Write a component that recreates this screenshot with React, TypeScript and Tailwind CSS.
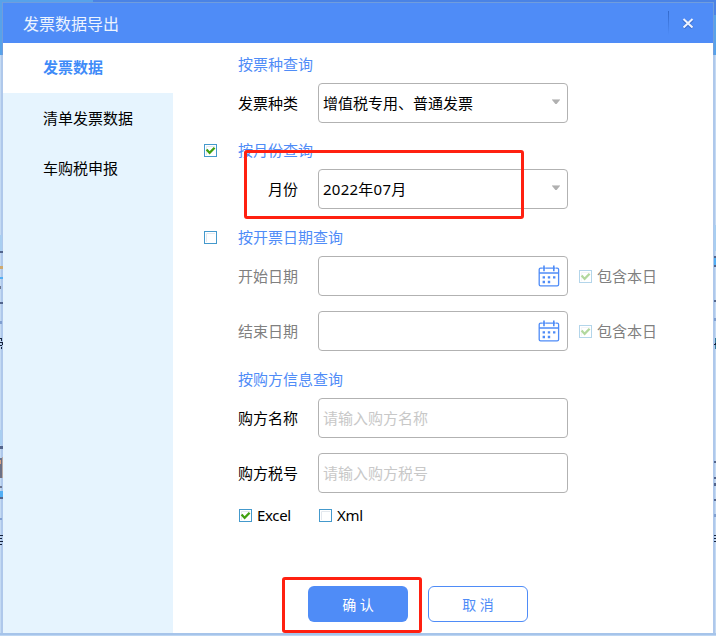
import type { ReactNode } from "react";

function Check({ checked = false, disabled = false }: { checked?: boolean; disabled?: boolean }) {
  return (
    <svg width="13" height="13" viewBox="0 0 13 13" className={disabled ? "shrink-0 opacity-40" : "shrink-0"}>
      <rect x="0.5" y="0.5" width="12" height="12" fill="#fff" stroke="#4499cc" />
      <path d="M2.5 11V2.5H11" fill="none" stroke="#e3e8ee" />
      {checked && <path d="M2.6 5.6L5.6 8.9L10.6 3.7" fill="none" stroke="#40a010" strokeWidth="2.3" />}
    </svg>
  );
}

function CalendarIcon() {
  return (
    <svg width="22" height="22" viewBox="0 0 22 22" fill="none" stroke="#4f8cf7" strokeWidth="1.3" className="-mr-px shrink-0">
      <path d="M4 3.2H2.6Q1.2 3.2 1.2 4.6V19.4Q1.2 20.8 2.6 20.8H19.2Q20.6 20.8 20.6 19.4V4.6Q20.6 3.2 19.2 3.2H18M8 3.2H14M1.2 8H20.6" />
      <path d="M6 0.4V6.2M15.8 0.4V6.2" strokeWidth="1.6" />
      <path d="M4.2 3.2H7.8M14 3.2H17.6" />
      <path d="M4.6 12.4H7M9.8 12.4H12.2M15 12.4H17.4M4.6 17H7M9.8 17H12.2" strokeWidth="2.3" />
    </svg>
  );
}

function Arrow() {
  return (
    <svg width="8" height="5" viewBox="0 0 8 5" className="-mr-px mb-[3px] shrink-0">
      <path d="M0.5 0H7.5V1.4L4.6 5H3.4L0.5 1.4Z" fill="#b0b0b0" />
      <path d="M0 0H8V1H0Z" fill="#d2d2d2" />
    </svg>
  );
}

function SectionTitle({ children, check, className }: { children: ReactNode; check?: ReactNode; className: string }) {
  return (
    <div className={"flex items-center text-[#4f8cf7] " + className}>
      <span className="flex w-[34px]">{check}</span>
      <span className="-mt-0.5">{children}</span>
    </div>
  );
}

function Row({ label, children, muted = false, after }: { label: string; children?: ReactNode; muted?: boolean; after?: ReactNode }) {
  return (
    <div className="flex h-10 items-center">
      <span className={"w-[94px] text-right " + (muted ? "text-[#808080]" : "text-black")}>{label}</span>
      <div className="ml-5 flex h-10 w-[250px] items-center justify-between rounded-[4px] border border-[#b2b2b2] bg-white pl-1 pr-2">
        {children}
      </div>
      {after}
    </div>
  );
}

function IncludeDay() {
  return (
    <span className="ml-[11px] flex items-center gap-[5px] text-[#808080]">
      <Check checked disabled />
      包含本日
    </span>
  );
}

function Backdrop() {
  return (
    <svg width="716" height="636" viewBox="0 0 716 636" shapeRendering="crispEdges" className="absolute inset-0">
      <rect width="716" height="636" fill="#afc8eb" />
      <rect width="93" height="3" fill="#57a2ea" />
      <rect x="93" width="623" height="3" fill="#4a83e5" />
      <rect y="3" width="3" height="52" fill="#57a2ea" />
      <rect x="713" y="3" width="3" height="12" fill="#4a83e5" />
      <rect x="713" y="15" width="3" height="40" fill="#57a2ea" />
      <path d="M0 55H1V636H0ZM715 55H716V636H715Z" fill="#c4daf3" />
      <path d="M2 2H714V55H713V3H3V55H2Z" fill="#709ddd" />
      <path d="M0 235H2V251H0ZM0 430H2V445H0ZM714 225H716V251H714Z" fill="#a9cef1" />
      <path d="M0 251H3V253H0ZM0 302H3V304H0ZM0 446H3V449H0ZM0 497H3V499H0ZM714 256H716V258H714ZM714 265H716V267H714ZM714 300H716V302H714ZM714 461H716V463H714ZM714 477H716V479H714ZM714 483H716V486H714ZM714 499H716V501H714Z" fill="#53658d" />
      <path d="M0 266H3V269H0Z" fill="#cfaa70" />
      <path d="M0 277H3V279H0ZM0 491H3V497H0ZM714 258H716V265H714Z" fill="#52aef4" />
      <path d="M0 286H1V289H0ZM0 458H2V460H0ZM0 486H2V488H0Z" fill="#6b7590" />
      <path d="M0 460H1V464H0Z" fill="#d9a486" />
      <path d="M1 459H2V478H1ZM0 464H1V478H0Z" fill="#6b7085" />
      <path d="M2 457H3V478H2Z" fill="#b9aaa5" />
      <path d="M0 321H2V324H0ZM0 518H2V520H0ZM714 318H716V321H714ZM714 514H716V517H714Z" fill="#819fd0" />
      <path d="M0 338H2V339H0ZM1 339H2V341H1ZM0 342H3V343H0ZM2 343H3V345H2ZM0 345H2V346H0ZM1 347H2V349H1ZM0 535H3V536H0ZM0 538H2V539H0ZM0 541H3V542H0ZM0 544H2V545H0ZM714 535H716V536H714ZM714 538H716V539H714ZM714 541H716V542H714ZM715 343H716V345H715ZM714 344H716V345H714Z" fill="#15223c" />
      <path d="M715 338H716V343H715ZM715 345H716V349H715Z" fill="#327b9c" />
      <rect y="633" width="716" height="2" fill="#a6c4ea" />
      <rect y="635" width="716" height="1" fill="#bdd6f2" />
    </svg>
  );
}

export default function App() {
  return (
    <div className="relative h-[636px] w-[716px] overflow-hidden p-[3px] text-[15px] leading-5 [font-family:'Noto_Sans','Noto_Sans_CJK_SC',sans-serif]">
      <Backdrop />
      <div className="relative flex h-[630px] w-[710px] flex-col bg-white">
        <header className="flex h-10 shrink-0 items-center bg-[#4f8cf7] pl-5 text-base text-white/90">
          <span className="mt-0.5">发票数据导出</span>
          <span className="ml-auto mr-[13px] h-6 w-px bg-linear-to-b from-[#3269cb] to-[#4f8cf7]" />
          <svg width="12" height="11" viewBox="0 0 12 11" className="mr-[19px]">
            <path d="M1.5 1.5L10.5 10M10.5 1.5L1.5 10" stroke="#3a6dce" strokeWidth="3.4" />
            <path d="M1.5 1L10.5 9.5M10.5 1L1.5 9.5" stroke="#eef3ff" strokeWidth="2.1" />
          </svg>
        </header>
        <div className="flex flex-1">
          <nav className="w-[170px] bg-[#e6f4fe] text-black">
            <div className="flex h-[50px] items-center bg-white pb-0.5 pl-10 font-bold text-[#3f8bf8]">发票数据</div>
            <div className="flex h-[50px] items-center pl-10">清单发票数据</div>
            <div className="flex h-[50px] items-center pl-10">车购税申报</div>
          </nav>
          <main className="flex flex-1 flex-col pl-[31px]">
            <SectionTitle className="h-10 pt-1">按票种查询</SectionTitle>
            <Row label="发票种类">
              增值税专用、普通发票
              <Arrow />
            </Row>
            <SectionTitle className="h-[46px] pt-[9px]" check={<Check checked />}>按月份查询</SectionTitle>
            <Row label="月份">
              <span className="tracking-[0.25px]">2022年07月</span>
              <Arrow />
            </Row>
            <SectionTitle className="h-[47px] pt-[10px]" check={<Check />}>按开票日期查询</SectionTitle>
            <div className="flex flex-col gap-[15px]">
              <Row label="开始日期" muted after={<IncludeDay />}>
                <span />
                <CalendarIcon />
              </Row>
              <Row label="结束日期" muted after={<IncludeDay />}>
                <span />
                <CalendarIcon />
              </Row>
            </div>
            <SectionTitle className="h-[47px] pt-[10px]">按购方信息查询</SectionTitle>
            <div className="flex flex-col gap-[15px]">
              <Row label="购方名称">
                <span className="text-[#c8c8c8]">请输入购方名称</span>
              </Row>
              <Row label="购方税号">
                <span className="text-[#c8c8c8]">请输入购方税号</span>
              </Row>
            </div>
            <div className="mt-3 flex h-5 items-center pl-[35px] text-black">
              <span className="flex w-20 items-center gap-[5px] tracking-[-0.35px]">
                <Check checked />
                Excel
              </span>
              <span className="flex items-center gap-[5px] tracking-[-0.3px]">
                <Check />
                Xml
              </span>
            </div>
            <div className="mt-[61px] flex gap-5 pl-[104px] text-sm">
              <button className="h-9 w-[100px] rounded-[6px] bg-[#4f8cf7] pt-0.5 text-white">确 认</button>
              <button className="h-9 w-[100px] rounded-[6px] border border-[#4f8cf7] bg-white pt-0.5 text-[#4f8cf7]">取 消</button>
            </div>
          </main>
        </div>
      </div>
      <div className="absolute left-[244px] top-[150px] h-[69px] w-[280px] rounded-[3px] border-3 border-[#ff2010]" />
      <div className="absolute left-[282px] top-[577px] h-[56px] w-[140px] rounded-[3px] border-3 border-[#ff2010]" />
    </div>
  );
}
